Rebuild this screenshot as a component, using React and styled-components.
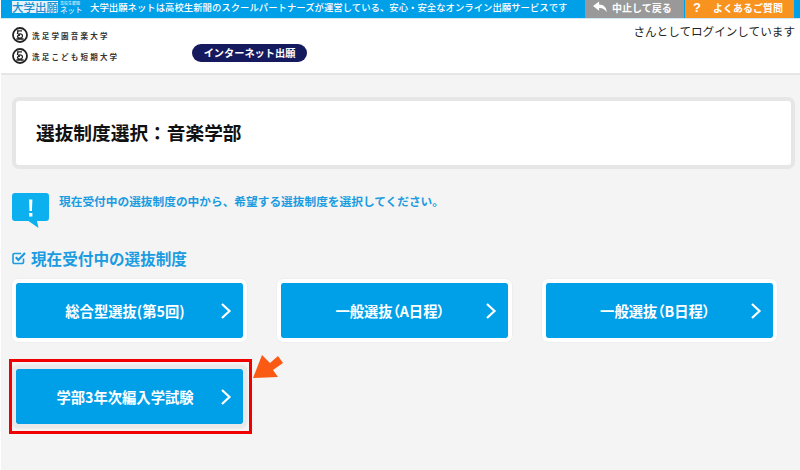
import React from "react"
import styled, { createGlobalStyle } from "styled-components"

const options = [
  "総合型選抜(第5回)",
  "一般選抜（A日程）",
  "一般選抜（B日程）",
]

const colleges = ["洗足学園音楽大学", "洗足こども短期大学"]

const CollegeMark = () => (
  <svg width="16" height="16" viewBox="0 0 16 16" fill="none" stroke="#222">
    <circle cx="8" cy="8" r="7" strokeWidth="1.800" />
    <path d="M5 3.800h5M6 3.800 5.400 7.200M4.300 12h7.400M6 7.400c3-1.400 5 .2 4.400 2.200-.5 1.700-3.600 1.900-4.600.8-.9-1 .4-2.600 2.200-2" strokeWidth="1.300" />
  </svg>
)

const App = () => {
  return (
    <Page>
      <GlobalStyle />
      <TopBar>
        <BrandBox>大学出願</BrandBox>
        <BrandNet>
          <small>高校生新聞</small>
          ネット
        </BrandNet>
        <TopText>大学出願ネットは高校生新聞のスクールパートナーズが運営している、安心・安全なオンライン出願サービスです</TopText>
        <TopButton $bg="#999999">
          <svg width="15" height="13" viewBox="0 0 16 13" fill="#fff">
            <path d="M6.500 0 0 5l6.500 5V7c3.400-.2 6 .9 8 4.600C14.600 6.400 11.500 3.400 6.500 3.200Z" />
          </svg>
          中止して戻る
        </TopButton>
        <TopButton $bg="#f7931e" $wide>
          <Question>?</Question>
          よくあるご質問
        </TopButton>
      </TopBar>

      <Header>
        <Colleges>
          {colleges.map((name) => (
            <College key={name}>
              <CollegeMark />
              <span>{name}</span>
            </College>
          ))}
        </Colleges>
        <Pill>インターネット出願</Pill>
        <LoginText>さんとしてログインしています</LoginText>
      </Header>

      <Main>
        <TitleCard>
          <h1>選抜制度選択：音楽学部</h1>
        </TitleCard>

        <Notice>
          <svg width="38" height="36" viewBox="0 0 38 36">
            <path
              d="M3 0h31a3 3 0 0 1 3 3v22a3 3 0 0 1-3 3h-9l1.500 7-10-7H3a3 3 0 0 1-3-3V3a3 3 0 0 1 3-3Z"
              fill="#0cb0ef"
            />
            <path d="M17 6.500h3.400l-.5 11.500h-2.400Z M17 20h3.400v3.500H17Z" fill="#fff" />
          </svg>
          <p>現在受付中の選抜制度の中から、希望する選抜制度を選択してください。</p>
        </Notice>

        <SectionTitle>
          <svg width="14" height="14" viewBox="0 0 14 14" fill="none" stroke="#1b9be0" strokeWidth="1.600">
            <path d="M11.500 7.500V11a1.500 1.500 0 0 1-1.500 1.500H2.500A1.500 1.500 0 0 1 1 11V4a1.500 1.500 0 0 1 1.500-1.500H9" />
            <path d="M3.800 6.200 6.400 9 13 2" strokeWidth="2.200" />
          </svg>
          現在受付中の選抜制度
        </SectionTitle>

        <OptionGrid>
          {options.map((label) => (
            <Option key={label}>
              <OptionLabel>{label}</OptionLabel>
              <Chevron />
            </Option>
          ))}
          <HighlightCell>
            <Option $muted>
              <OptionLabel>学部3年次編入学試験</OptionLabel>
              <Chevron />
            </Option>
            <Highlight />
            <Pointer width="32" height="28" viewBox="0 0 32 28">
              <path d="M1 26 10 3l8 8 8-7 5 7-10 7 5 7Z" fill="#fb5a14" />
            </Pointer>
          </HighlightCell>
        </OptionGrid>
      </Main>
    </Page>
  )
}

const Chevron = () => (
  <ChevronIcon width="12" height="18" viewBox="0 0 12 18" fill="none" stroke="#fff" strokeWidth="2.200">
    <path d="M2 2l7.500 7L2 16" />
  </ChevronIcon>
)

const GlobalStyle = createGlobalStyle`
  html, body {
    margin: 0;
    padding: 0;
    background: #f4f4f4;
  }

  * {
    box-sizing: border-box;
  }
`

const Page = styled.div`
  width: 800px;
  height: 470px;
  overflow: hidden;
  background: #f4f4f4;
  border-left: 1px solid #fff;
  font-family: "Noto Sans CJK JP", "Noto Sans", sans-serif;
`

const TopBar = styled.div`
  display: flex;
  align-items: stretch;
  height: 19px;
  padding-left: 11px;
  background: #00a0e9;
  border-bottom: 1px solid #cfe9f7;
  color: #fff;
`

const BrandBox = styled.div`
  width: 46px;
  height: 12px;
  margin-top: 1px;
  background: #e6f2f9;
  color: #1a8fd0;
  font-size: 11.500px;
  font-weight: 500;
  line-height: 12px;
  text-align: center;
  white-space: nowrap;
`

const BrandNet = styled.div`
  display: flex;
  flex-direction: column;
  width: 32px;
  padding-left: 2px;
  font-size: 7.500px;
  line-height: 8px;
  white-space: nowrap;

  small {
    height: 5px;
    margin-top: 1px;
    font-size: 4px;
    line-height: 5px;
  }
`

const TopText = styled.div`
  flex: 1;
  font-size: 9.400px;
  font-weight: 500;
  line-height: 15px;
  white-space: nowrap;
`

const TopButton = styled.div`
  display: flex;
  align-items: center;
  gap: ${(p) => (p.$wide ? "12px" : "4px")};
  width: ${(p) => (p.$wide ? "109px" : "99px")};
  height: 18px;
  margin-right: ${(p) => (p.$wide ? "6px" : "1px")};
  padding: 0 0 3px 8px;
  background: ${(p) => p.$bg};
  font-size: 10px;
  font-weight: 700;
  white-space: nowrap;
`

const Question = styled.span`
  font-family: "Liberation Sans", sans-serif;
  font-size: 13px;
  font-weight: 700;
  line-height: 15px;
`

const Header = styled.header`
  position: relative;
  display: flex;
  height: 56px;
  padding: 8px 0 0 11px;
  background: #fff;
  border-bottom: 2px solid #e6e6e6;
`

const Colleges = styled.div`
  display: flex;
  flex-direction: column;
  gap: 5px;
  width: 180px;
`

const College = styled.div`
  display: flex;
  align-items: center;
  gap: 4px;
  height: 16px;
  color: #333;
  font-size: 7.500px;
  font-weight: 700;
  letter-spacing: 2.200px;
  white-space: nowrap;
`

const Pill = styled.div`
  align-self: flex-start;
  width: 115px;
  height: 18px;
  margin-top: 17px;
  background: #151a5e;
  border-radius: 9px;
  color: #fff;
  font-size: 10.200px;
  font-weight: 700;
  line-height: 17px;
  text-align: center;
  white-space: nowrap;
`

const LoginText = styled.div`
  position: absolute;
  top: 4px;
  right: 5px;
  color: #222;
  font-size: 11.600px;
  line-height: 16px;
  white-space: nowrap;
`

const Main = styled.main`
  padding: 22px 0 0 11px;
`

const TitleCard = styled.section`
  width: 783px;
  height: 72px;
  padding-left: 20px;
  background: #fff;
  border: 4px solid #e6e6e6;
  border-radius: 7px;

  h1 {
    margin: 0;
    color: #111;
    font-size: 18.700px;
    font-weight: 700;
    line-height: 62px;
  }
`

const Notice = styled.div`
  display: flex;
  gap: 9px;
  margin-top: 24px;
  height: 36px;

  svg {
    flex: none;
  }

  p {
    margin: 0;
    color: #1b9be0;
    font-size: 11.700px;
    font-weight: 700;
    line-height: 15px;
    white-space: nowrap;
  }
`

const SectionTitle = styled.h2`
  display: flex;
  align-items: center;
  gap: 5px;
  height: 22px;
  margin: 18px 0 0;
  color: #1b9be0;
  font-size: 15.600px;
  font-weight: 700;
  line-height: 22px;
  white-space: nowrap;
`

const OptionGrid = styled.div`
  display: grid;
  grid-template-columns: repeat(3, 235px);
  column-gap: 30px;
  row-gap: 23px;
  margin-top: 10px;
`

const Option = styled.a`
  display: flex;
  align-items: center;
  height: 63px;
  padding-right: 11px;
  background: #00a0e9;
  background-clip: padding-box;
  border: 4px solid ${(p) => (p.$muted ? "#e9e9e9" : "#fff")};
  border-radius: 6px;
  box-shadow: 0 0 0 0.500px #e8e8e8;
  color: #fff;
`

const OptionLabel = styled.span`
  flex: 1;
  padding-left: 14px;
  font-size: 14.300px;
  font-weight: 700;
  font-feature-settings: "palt";
  text-align: center;
  white-space: nowrap;
`

const ChevronIcon = styled.svg`
  flex: none;
`

const HighlightCell = styled.div`
  position: relative;
`

const Highlight = styled.div`
  position: absolute;
  top: -6px;
  left: -3px;
  width: 243px;
  height: 75px;
  border: 3px solid #f00000;
  pointer-events: none;
`

const Pointer = styled.svg`
  position: absolute;
  top: -13px;
  left: 240px;
`

export default App
